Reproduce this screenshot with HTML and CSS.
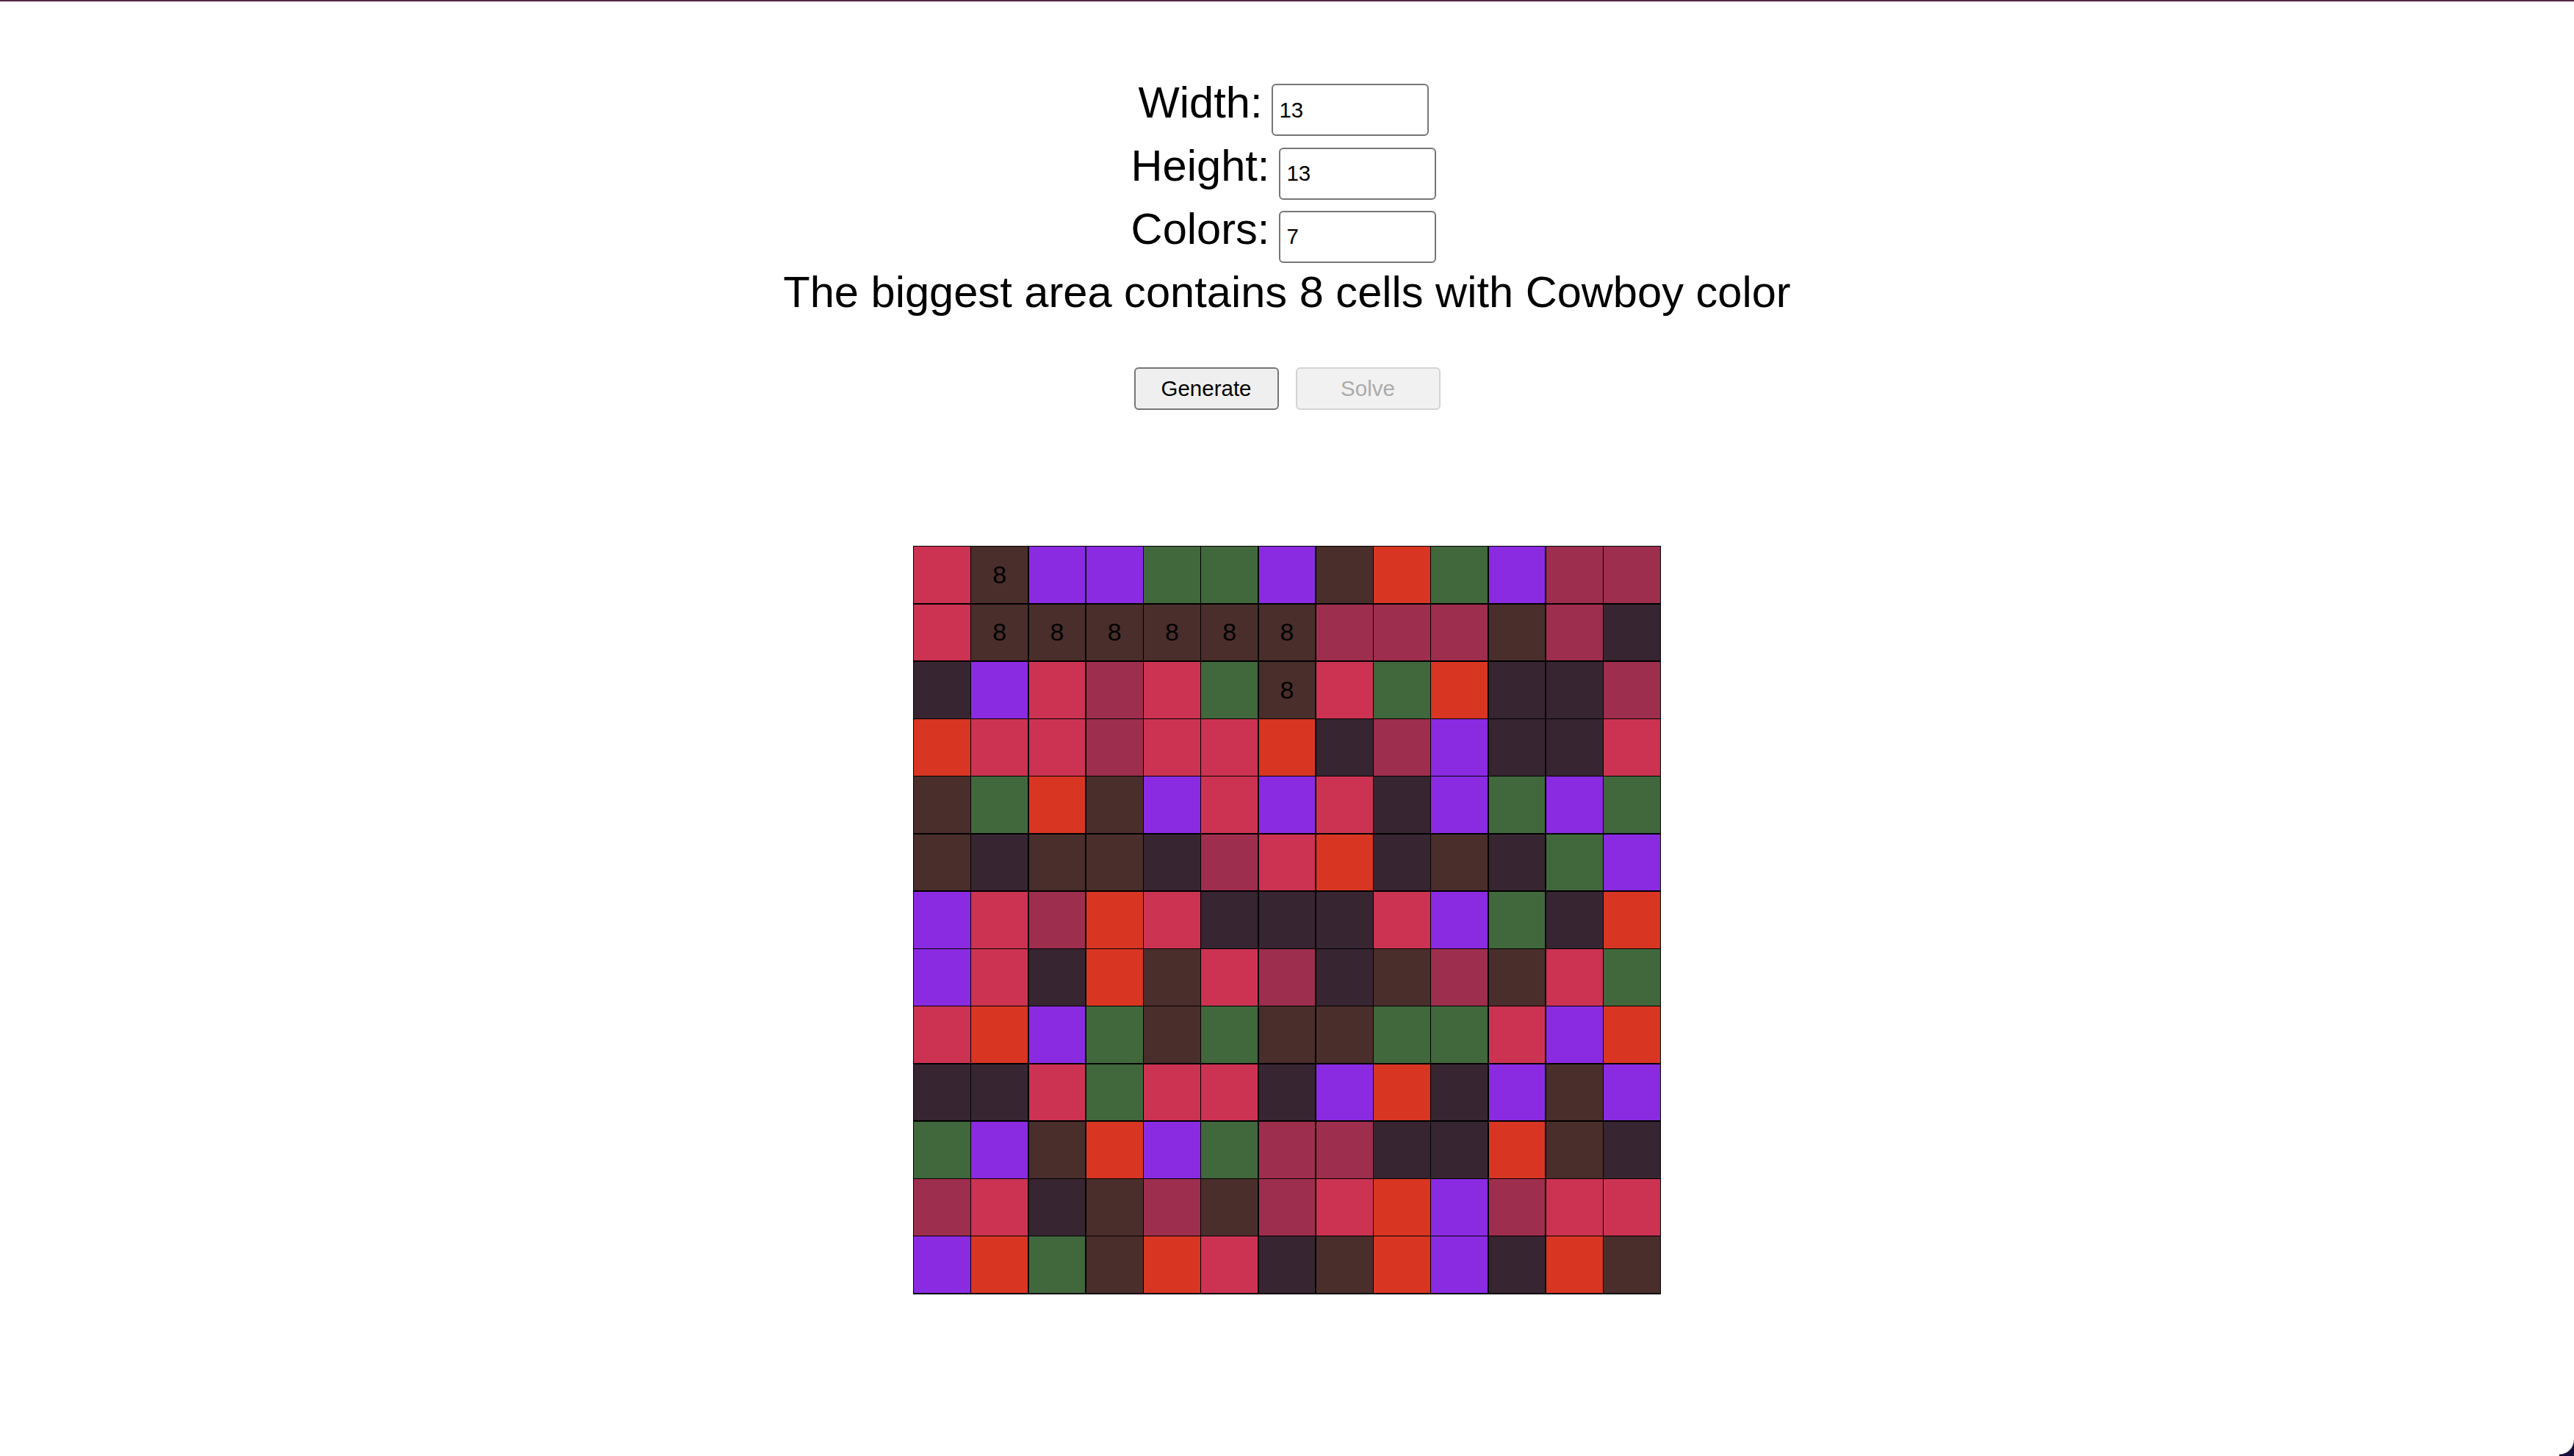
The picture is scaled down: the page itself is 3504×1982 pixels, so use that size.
FILE: index.html
```html
<!DOCTYPE html>
<html lang="en">
<head>
<meta charset="utf-8">
<title>Biggest area</title>
<link rel="stylesheet" href="styles.css">
</head>
<body>
<div class="topbar"></div>
<main class="page">
  <section class="controls">
    <div class="row"><label class="label" for="w">Width:</label><input class="field" id="w" type="text" value="13"></div>
    <div class="row"><label class="label" for="h">Height:</label><input class="field" id="h" type="text" value="13"></div>
    <div class="row"><label class="label" for="c">Colors:</label><input class="field" id="c" type="text" value="7"></div>
    <div class="result">The biggest area contains 8 cells with Cowboy color</div>
  </section>
  <div class="buttons">
    <button class="btn" type="button">Generate</button>
    <button class="btn" type="button" disabled>Solve</button>
  </div>
  <div class="board">
    <div class="cell p"></div><div class="cell b">8</div><div class="cell v"></div><div class="cell v"></div><div class="cell g"></div><div class="cell g"></div><div class="cell v"></div><div class="cell b"></div><div class="cell r"></div><div class="cell g"></div><div class="cell v"></div><div class="cell m"></div><div class="cell m"></div>
    <div class="cell p"></div><div class="cell b">8</div><div class="cell b">8</div><div class="cell b">8</div><div class="cell b">8</div><div class="cell b">8</div><div class="cell b">8</div><div class="cell m"></div><div class="cell m"></div><div class="cell m"></div><div class="cell b"></div><div class="cell m"></div><div class="cell d"></div>
    <div class="cell d"></div><div class="cell v"></div><div class="cell p"></div><div class="cell m"></div><div class="cell p"></div><div class="cell g"></div><div class="cell b">8</div><div class="cell p"></div><div class="cell g"></div><div class="cell r"></div><div class="cell d"></div><div class="cell d"></div><div class="cell m"></div>
    <div class="cell r"></div><div class="cell p"></div><div class="cell p"></div><div class="cell m"></div><div class="cell p"></div><div class="cell p"></div><div class="cell r"></div><div class="cell d"></div><div class="cell m"></div><div class="cell v"></div><div class="cell d"></div><div class="cell d"></div><div class="cell p"></div>
    <div class="cell b"></div><div class="cell g"></div><div class="cell r"></div><div class="cell b"></div><div class="cell v"></div><div class="cell p"></div><div class="cell v"></div><div class="cell p"></div><div class="cell d"></div><div class="cell v"></div><div class="cell g"></div><div class="cell v"></div><div class="cell g"></div>
    <div class="cell b"></div><div class="cell d"></div><div class="cell b"></div><div class="cell b"></div><div class="cell d"></div><div class="cell m"></div><div class="cell p"></div><div class="cell r"></div><div class="cell d"></div><div class="cell b"></div><div class="cell d"></div><div class="cell g"></div><div class="cell v"></div>
    <div class="cell v"></div><div class="cell p"></div><div class="cell m"></div><div class="cell r"></div><div class="cell p"></div><div class="cell d"></div><div class="cell d"></div><div class="cell d"></div><div class="cell p"></div><div class="cell v"></div><div class="cell g"></div><div class="cell d"></div><div class="cell r"></div>
    <div class="cell v"></div><div class="cell p"></div><div class="cell d"></div><div class="cell r"></div><div class="cell b"></div><div class="cell p"></div><div class="cell m"></div><div class="cell d"></div><div class="cell b"></div><div class="cell m"></div><div class="cell b"></div><div class="cell p"></div><div class="cell g"></div>
    <div class="cell p"></div><div class="cell r"></div><div class="cell v"></div><div class="cell g"></div><div class="cell b"></div><div class="cell g"></div><div class="cell b"></div><div class="cell b"></div><div class="cell g"></div><div class="cell g"></div><div class="cell p"></div><div class="cell v"></div><div class="cell r"></div>
    <div class="cell d"></div><div class="cell d"></div><div class="cell p"></div><div class="cell g"></div><div class="cell p"></div><div class="cell p"></div><div class="cell d"></div><div class="cell v"></div><div class="cell r"></div><div class="cell d"></div><div class="cell v"></div><div class="cell b"></div><div class="cell v"></div>
    <div class="cell g"></div><div class="cell v"></div><div class="cell b"></div><div class="cell r"></div><div class="cell v"></div><div class="cell g"></div><div class="cell m"></div><div class="cell m"></div><div class="cell d"></div><div class="cell d"></div><div class="cell r"></div><div class="cell b"></div><div class="cell d"></div>
    <div class="cell m"></div><div class="cell p"></div><div class="cell d"></div><div class="cell b"></div><div class="cell m"></div><div class="cell b"></div><div class="cell m"></div><div class="cell p"></div><div class="cell r"></div><div class="cell v"></div><div class="cell m"></div><div class="cell p"></div><div class="cell p"></div>
    <div class="cell v"></div><div class="cell r"></div><div class="cell g"></div><div class="cell b"></div><div class="cell r"></div><div class="cell p"></div><div class="cell d"></div><div class="cell b"></div><div class="cell r"></div><div class="cell v"></div><div class="cell d"></div><div class="cell r"></div><div class="cell b"></div>
  </div>
</main>
<div class="corner"></div>
</body>
</html>
```

FILE: styles.css
```css
html, body {
  margin: 0;
  padding: 0;
  background: #ffffff;
}

body {
  font-family: "Liberation Sans", Arial, Helvetica, sans-serif;
  color: #000;
}

.topbar {
  height: 2px;
  background: #56294b;
}

.page {
  display: flex;
  flex-direction: column;
  align-items: center;
}

.controls {
  display: flex;
  flex-direction: column;
  align-items: center;
  padding-top: 104.8px;
}

.row {
  display: flex;
  align-items: baseline;
  justify-content: center;
  gap: 13px;
  padding-right: 9px;
  margin-bottom: 7.8px;
}

.label {
  font-size: 59.6px;
  line-height: 66.6px;
}

.field {
  box-sizing: border-box;
  width: 214px;
  height: 71px;
  margin: 0;
  padding: 0 8px;
  border: 2px solid #767676;
  border-radius: 6px;
  background: #fff;
  font-family: "Liberation Sans", Arial, sans-serif;
  font-size: 29.5px;
  color: #000;
}

.result {
  margin-top: -1px;
  font-size: 59.6px;
  line-height: 66.6px;
  white-space: nowrap;
}

.buttons {
  display: flex;
  justify-content: center;
  gap: 23px;
  margin-top: 68.5px;
}

.btn {
  box-sizing: border-box;
  width: 197px;
  height: 58px;
  margin: 0;
  padding: 0;
  border: 2px solid #767676;
  border-radius: 6px;
  background: #efefef;
  font-family: "Liberation Sans", Arial, sans-serif;
  font-size: 29.5px;
  color: #000;
}

.btn:disabled {
  border-color: #d3d3d3;
  background: #f1f1f1;
  color: #ababab;
}

.board {
  display: grid;
  grid-template-columns: repeat(13, 76.75px);
  grid-auto-rows: 76.75px;
  gap: 1.5px;
  padding: 1.5px;
  margin-top: 185px;
  background: #000;
}

.cell {
  display: flex;
  align-items: center;
  justify-content: center;
  font-family: "Liberation Sans", Arial, sans-serif;
  font-size: 34px;
  color: #000;
}

.p { background: #cc3352; }
.b { background: #4a2e2b; }
.v { background: #8a2be2; }
.g { background: #41683c; }
.d { background: #372531; }
.m { background: #9e2e4e; }
.r { background: #d83623; }

.corner {
  position: fixed;
  right: 0;
  bottom: 0;
  width: 20px;
  height: 22px;
  background: radial-gradient(circle at 0 0, transparent 19px, #17103a 20.5px);
}
```
